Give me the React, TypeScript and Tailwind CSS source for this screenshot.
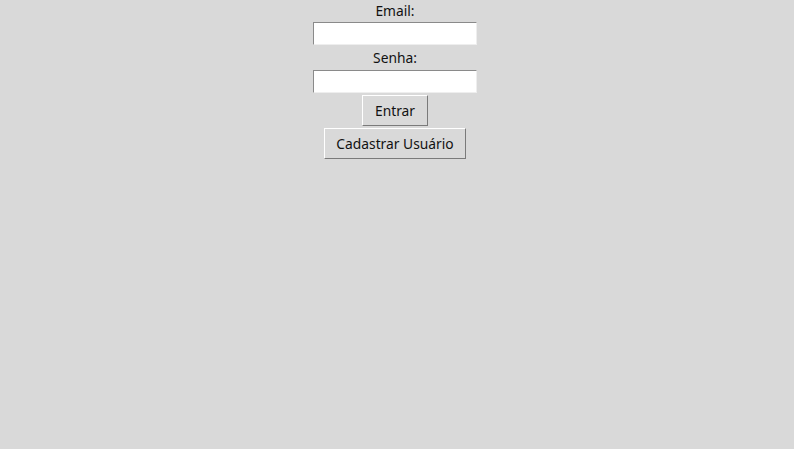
export default function App() {
  return (
    <div className="w-[794px] h-[449px] bg-[#d9d9d9] text-[#111] font-['Noto_Sans',sans-serif] text-[13.8px]">
      <div className="flex flex-col items-center pr-[4px]">
        <label className="h-[22px] leading-[22px]">Email:</label>
        <input type="text" className="w-[164px] h-[23px] bg-white border-t border-l border-t-[#8a8a8a] border-l-[#8a8a8a] border-b border-r border-b-[#eeeeee] border-r-[#eeeeee] outline-none px-1" />
        <label className="h-[25px] leading-[25px]">Senha:</label>
        <input type="password" className="w-[164px] h-[23px] bg-white border-t border-l border-t-[#8a8a8a] border-l-[#8a8a8a] border-b border-r border-b-[#eeeeee] border-r-[#eeeeee] outline-none px-1" />
        <button className="mt-[2px] pt-[2px] w-[66px] h-[31px] bg-[#d9d9d9] border-t border-l border-t-white border-l-white border-b border-r border-b-[#7a7a7a] border-r-[#7a7a7a]">
          Entrar
        </button>
        <button className="mt-[2px] pt-[2px] w-[142px] h-[31px] bg-[#d9d9d9] border-t border-l border-t-white border-l-white border-b border-r border-b-[#7a7a7a] border-r-[#7a7a7a]">
          Cadastrar Usuário
        </button>
      </div>
    </div>
  );
}
